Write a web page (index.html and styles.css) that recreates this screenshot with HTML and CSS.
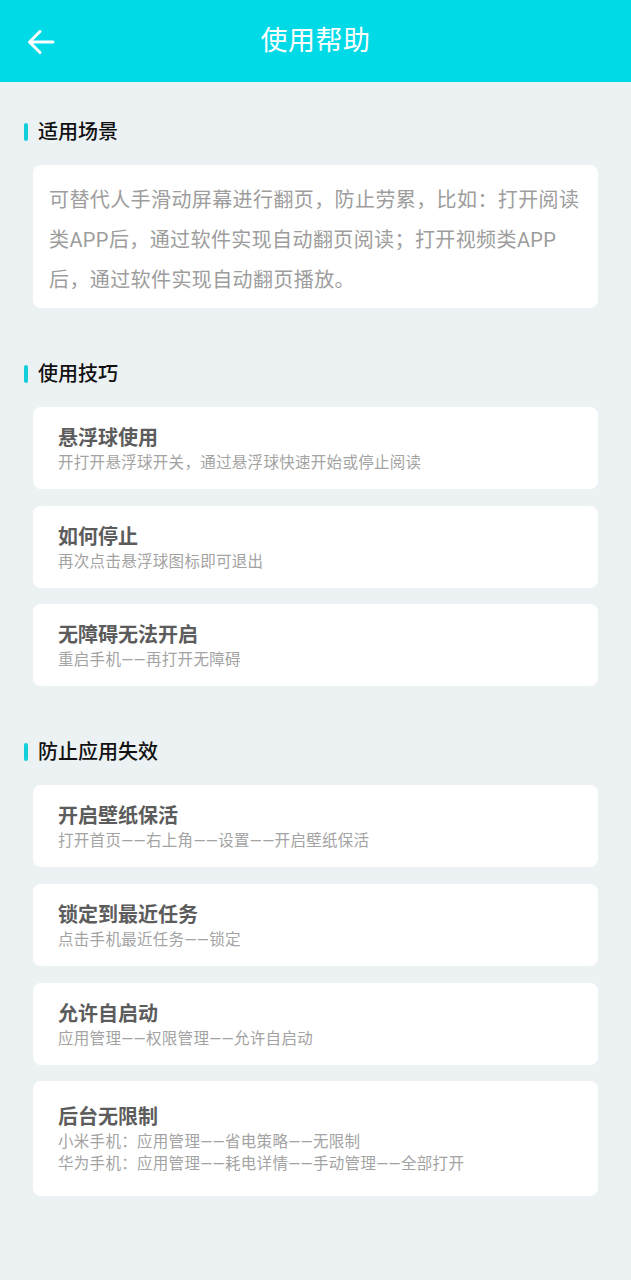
FILE: index.html
```html
<!DOCTYPE html>
<html lang="zh-CN">
<head>
<meta charset="utf-8">
<title>使用帮助</title>
<link rel="stylesheet" href="styles.css">
</head>
<body>
<header class="topbar">
  <span class="back" aria-label="返回">
    <svg width="28" height="26" viewBox="0 0 28 26"><path d="M26 13H3M13 2.5L2.5 13L13 23.5" fill="none" stroke="#fff" stroke-width="3" stroke-linecap="round" stroke-linejoin="round"/></svg>
  </span>
  <h1 class="title">使用帮助</h1>
</header>
<main class="content">
  <section class="section">
    <h2 class="sec-title">适用场景</h2>
    <div class="card card-text">可替代人手滑动屏幕进行翻页，防止劳累，比如：打开阅读<br>类APP后，通过软件实现自动翻页阅读；打开视频类APP<br>后，通过软件实现自动翻页播放。</div>
  </section>
  <section class="section">
    <h2 class="sec-title">使用技巧</h2>
    <div class="list">
      <div class="card item"><div class="item-title">悬浮球使用</div><div class="item-sub">开打开悬浮球开关，通过悬浮球快速开始或停止阅读</div></div>
      <div class="card item"><div class="item-title">如何停止</div><div class="item-sub">再次点击悬浮球图标即可退出</div></div>
      <div class="card item"><div class="item-title">无障碍无法开启</div><div class="item-sub">重启手机——再打开无障碍</div></div>
    </div>
  </section>
  <section class="section">
    <h2 class="sec-title">防止应用失效</h2>
    <div class="list">
      <div class="card item"><div class="item-title">开启壁纸保活</div><div class="item-sub">打开首页——右上角——设置——开启壁纸保活</div></div>
      <div class="card item"><div class="item-title">锁定到最近任务</div><div class="item-sub">点击手机最近任务——锁定</div></div>
      <div class="card item"><div class="item-title">允许自启动</div><div class="item-sub">应用管理——权限管理——允许自启动</div></div>
      <div class="card item item-tall"><div class="item-title">后台无限制</div><div class="item-sub">小米手机：应用管理——省电策略——无限制</div><div class="item-sub">华为手机：应用管理——耗电详情——手动管理——全部打开</div></div>
    </div>
  </section>
</main>
</body>
</html>
```
FILE: styles.css
```css
* { box-sizing: border-box; }
html, body { margin: 0; padding: 0; }
body {
  background: #ecf1f4;
  font-family: Roboto, "Noto Sans CJK SC", sans-serif;
  min-height: 1280px;
}
.topbar {
  height: 82px;
  background: #00d9e6;
  display: flex;
  align-items: center;
  justify-content: center;
  position: relative;
}
.back {
  position: absolute;
  left: 27px;
  top: 29px;
  width: 28px;
  height: 26px;
  display: block;
}
.back svg { display: block; }
.title {
  margin: 0;
  color: #fff;
  font-size: 27px;
  font-weight: 400;
  line-height: 36px;
  letter-spacing: 0.5px;
}
.content {
  padding: 38px 33px 40px 33px;
  display: flex;
  flex-direction: column;
  gap: 54px;
}
.section {
  display: flex;
  flex-direction: column;
  gap: 21px;
}
.sec-title {
  margin: 0 0 0 -9px;
  font-size: 20px;
  font-weight: 500;
  color: #111;
  line-height: 24px;
  display: flex;
  align-items: center;
  gap: 10px;
}
.sec-title::before {
  content: "";
  width: 4px;
  height: 18px;
  border-radius: 2px;
  background: #13cfdc;
}
.card {
  background: #fff;
  border-radius: 8px;
}
.card-text {
  padding: 15px 10px 8px 16px;
  font-size: 20px;
  letter-spacing: 0.4px;
  line-height: 40px;
  color: #9d9d9d;
  white-space: nowrap;
}
.list {
  display: flex;
  flex-direction: column;
  gap: 16.7px;
}
.item {
  height: 82px;
  padding: 17px 25px 15px 25px;
}
.item-tall {
  height: 115px;
  padding-top: 22px;
}
.item-title {
  font-size: 20px;
  font-weight: 700;
  color: #5c5c5c;
  line-height: 28px;
}
.item-sub {
  font-size: 15.5px;
  letter-spacing: 0.3px;
  color: #a3a3a3;
  line-height: 22px;
}
```
